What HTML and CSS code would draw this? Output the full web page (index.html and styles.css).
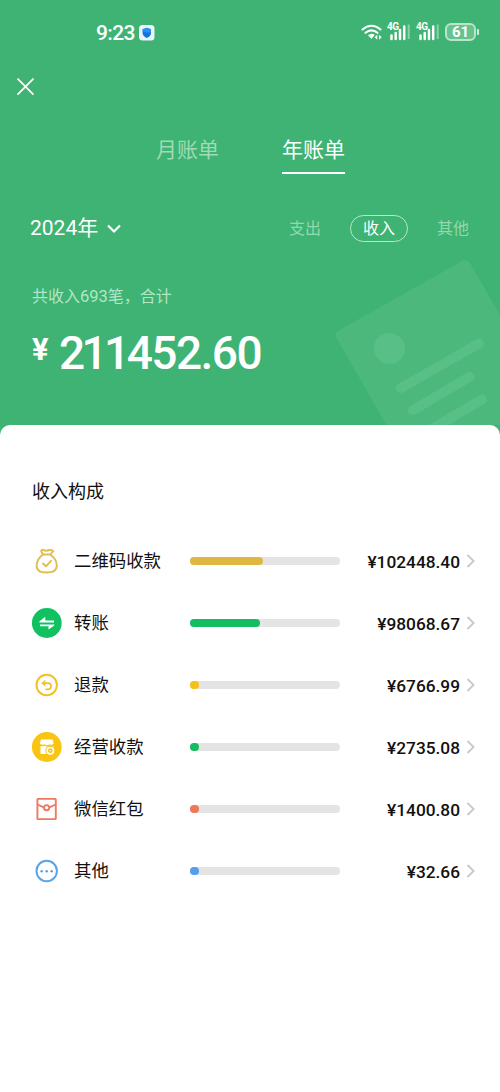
FILE: index.html
```
<!DOCTYPE html>
<html lang="zh-CN">
<head>
<meta charset="utf-8">
<title>年账单</title>
<link rel="stylesheet" href="styles.css">
</head>
<body>
<div class="screen">
  <header class="hero">
    <svg class="bill-art" width="190" height="185" viewBox="310 240 190 185" aria-hidden="true">
      <path class="art-sheet" d="M338 331L462 261Q466 258 470 263L500 315V426H387L336 337Q334 333 338 331Z"/>
      <circle class="art-mark" cx="389.500" cy="348.500" r="15.500"/>
      <path class="art-lines" d="M401 388L479 343.500M413 410L469.500 377M425 433L482 399.500"/>
    </svg>
    <div class="status">
      <span class="clock">9:23</span>
      <svg class="shield" width="16" height="16" viewBox="0 0 16 16"><rect width="15.500" height="15.500" rx="3.500" fill="#e9f5fb"/><path d="M7.800 2.700L12 4.200V8Q12 11.200 7.800 13Q3.600 11.200 3.600 8V4.200Z" fill="#1672df"/><path d="M7.800 2.700L12 4.200V7Q8 9 3.600 6V4.200Z" fill="#2b91ee"/></svg>
      <div class="status-right">
        <svg class="wifi" width="22" height="18" viewBox="0 0 22 18"><path d="M1.500 6.500Q10.500-1 19.500 6.500M4.500 9.800Q10.500 4.800 16.500 9.800" fill="none" stroke="#fff" stroke-width="2.100" stroke-linecap="round"/><path d="M6.900 12.200Q10.500 9.300 13.700 11.800L10.500 16Z" fill="#fff"/><path d="M13.500 14.300L16.300 11.800V16.800ZM20.700 14.300L18 11.800V16.800Z" fill="#fff"/></svg>
        <div class="cell"><span>4G</span><svg width="24" height="18" viewBox="0 0 24 18"><path d="M4.500 12.500V16M8.700 10V16M13 7V16M17.200 3.500V16" stroke="#fff" stroke-width="2.500" stroke-linecap="round"/><path d="M21.700 1.500V16" stroke="#8bd1aa" stroke-width="2"/></svg></div>
        <div class="cell"><span>4G</span><svg width="24" height="18" viewBox="0 0 24 18"><path d="M4.500 12.500V16M8.700 10V16M13 7V16M17.200 3.500V16" stroke="#fff" stroke-width="2.500" stroke-linecap="round"/><path d="M21.700 1.500V16" stroke="#8bd1aa" stroke-width="2"/></svg></div>
        <div class="battery">61</div>
      </div>
    </div>
    <div class="nav"><svg width="20" height="20" viewBox="0 0 20 20"><path d="M1.500 1.700L17.500 17.700M17.500 1.700L1.500 17.700" stroke="#fff" stroke-width="1.700"/></svg></div>
    <div class="tabs"><span class="tab">月账单</span><span class="tab tab-on">年账单</span></div>
    <div class="filters">
      <span class="year">2024年</span>
      <svg class="down" width="16" height="12" viewBox="0 0 16 12"><path d="M2 2.500L8 8.500L14 2.500" fill="none" stroke="#fff" stroke-width="2.200"/></svg>
      <div class="kinds"><span>支出</span><span class="kind-on">收入</span><span>其他</span></div>
    </div>
    <div class="summary">共收入<span class="count">693</span>笔，合计</div>
    <div class="total"><span class="yen">¥</span><span class="sum"><span class="tight">211</span>452.60</span></div>
  </header>
  <main class="card">
    <h1>收入构成</h1>
    <div class="row">
      <svg class="icon" width="30" height="30" viewBox="0 0 30 30"><g fill="none" stroke="#e2bd50" stroke-width="2" stroke-linejoin="round" stroke-linecap="round"><path d="M11 8.500C6 12 4.600 17 4.600 20C4.600 25 8 26.500 14.500 26.500C22 26.500 24.800 24.500 24.800 20C24.800 15.500 22 11 18 8.500Z"/><path d="M11 8.500L9.300 5.500Q9 3.800 11 3.800Q14 5.300 16.500 4.300Q19 3.700 21.300 5L18.500 8.500"/><path d="M11 17.500L14 20.300L19 14.800"/></g></svg>
      <span class="name">二维码收款</span>
      <div class="bar"><div class="fill gold" style="width:48.6%"></div></div>
      <span class="amount">¥102448.40</span><svg class="go" width="10" height="16" viewBox="0 0 10 16"><path d="M1.500 2L7.600 8L1.500 14"/></svg>
    </div>
    <div class="row">
      <svg class="icon" width="30" height="30" viewBox="0 0 30 30"><circle cx="14.800" cy="15" r="14.900" fill="#0fc161"/><path d="M13.300 8.800V12.600H22V14.400H7.500V13.300ZM16.500 21.500V18.200H8V16.400H22.300V17.500Z" fill="#fff"/></svg>
      <span class="name">转账</span>
      <div class="bar"><div class="fill green" style="width:46.6%"></div></div>
      <span class="amount">¥98068.67</span><svg class="go" width="10" height="16" viewBox="0 0 10 16"><path d="M1.500 2L7.600 8L1.500 14"/></svg>
    </div>
    <div class="row">
      <svg class="icon" width="30" height="30" viewBox="0 0 30 30"><g fill="none" stroke="#f2c225"><circle cx="14.700" cy="15" r="10.200" stroke-width="2"/><path d="M11.500 13.200H16.500A3.100 3.100 0 0 1 16.500 19.300H13.500" stroke-width="1.800"/></g><path d="M9.300 13.200L13.300 9.700V16.700Z" fill="#f2c225"/></svg>
      <span class="name">退款</span>
      <div class="bar"><div class="fill yellow" style="width:3%"></div></div>
      <span class="amount">¥6766.99</span><svg class="go" width="10" height="16" viewBox="0 0 10 16"><path d="M1.500 2L7.600 8L1.500 14"/></svg>
    </div>
    <div class="row">
      <svg class="icon" width="30" height="30" viewBox="0 0 30 30"><circle cx="14.800" cy="15" r="14.900" fill="#f8c513"/><path d="M9 7.500H20.500L21.700 11.500Q19.700 13.600 17.700 12.200Q15 14 12.500 12.200Q10 13.700 7.800 11.500Z" fill="#fff"/><path d="M8.500 14Q10.500 14.700 12.400 13.700Q15 15.200 17.700 13.700Q19.500 14.700 21.500 14V22H8.500Z" fill="#fff"/><circle cx="18.300" cy="18.700" r="5" fill="#f8c513"/><circle cx="18.300" cy="18.700" r="3.200" fill="none" stroke="#fff" stroke-width="1.700"/><circle cx="18.300" cy="18.700" r=".8" fill="#fff"/></svg>
      <span class="name">经营收款</span>
      <div class="bar"><div class="fill green" style="width:3%"></div></div>
      <span class="amount">¥2735.08</span><svg class="go" width="10" height="16" viewBox="0 0 10 16"><path d="M1.500 2L7.600 8L1.500 14"/></svg>
    </div>
    <div class="row">
      <svg class="icon" width="30" height="30" viewBox="0 0 30 30"><g fill="none" stroke="#ee7960" stroke-width="1.900"><rect x="5.400" y="4.900" width="18.400" height="20.200" rx=".6"/><path d="M5.400 10.500L11.800 13.300M17.400 13.300L23.800 10.500"/><circle cx="14.600" cy="13.700" r="2.600"/></g></svg>
      <span class="name">微信红包</span>
      <div class="bar"><div class="fill red" style="width:3%"></div></div>
      <span class="amount">¥1400.80</span><svg class="go" width="10" height="16" viewBox="0 0 10 16"><path d="M1.500 2L7.600 8L1.500 14"/></svg>
    </div>
    <div class="row">
      <svg class="icon" width="30" height="30" viewBox="0 0 30 30"><circle cx="14.700" cy="15" r="10.200" fill="none" stroke="#5ba4ea" stroke-width="2"/><g fill="#5b9bdc"><circle cx="9.700" cy="15.200" r="1.200"/><circle cx="14.700" cy="15.200" r="1.200"/><circle cx="19.700" cy="15.200" r="1.200"/></g></svg>
      <span class="name">其他</span>
      <div class="bar"><div class="fill blue" style="width:3%"></div></div>
      <span class="amount">¥32.66</span><svg class="go" width="10" height="16" viewBox="0 0 10 16"><path d="M1.500 2L7.600 8L1.500 14"/></svg>
    </div>
  </main>
</div>
</body>
</html>
```
FILE: styles.css
```
* { box-sizing: border-box; }
body { margin: 0; font-family: Roboto, "Noto Sans CJK SC", sans-serif; }
svg { display: block; flex: none; }
.screen { width: 500px; height: 1092px; background: #3eb373; display: flex; flex-direction: column; overflow: hidden; }
.hero { height: 425px; position: relative; color: #fff; flex: none; isolation: isolate; }
.bill-art { position: absolute; right: 0; bottom: 0; z-index: -1; }
.art-sheet { fill: #4cb87c; }
.art-mark { fill: #58bf86; }
.art-lines { fill: none; stroke: #58bf86; stroke-width: 10px; stroke-linecap: round; }
.status { height: 64px; display: flex; align-items: center; padding: 0 21px 0 96px; }
.clock { font-size: 21px; line-height: 24px; width: 43px; letter-spacing: -.6px; font-weight: 500; padding-top: 1px; }
.shield { margin-top: 1px; }
.status-right { margin-left: auto; display: flex; align-items: center; }
.wifi { margin-right: 4px; }
.cell { display: flex; position: relative; width: 24px; margin-right: 5px; }
.cell span { position: absolute; left: 0; top: -2px; font-size: 10px; line-height: 12px; font-weight: 700; letter-spacing: -.5px; }
.battery { width: 31px; height: 18px; border: 2px solid #b9e5cb; border-radius: 6px; background: #66c28e; font-size: 15px; line-height: 15px; font-weight: 700; text-align: center; position: relative; margin-right: 3px; }
.battery::after { content: ""; position: absolute; right: -5px; top: 4px; width: 2px; height: 6px; background: #d8f0e1; border-radius: 1px; }
.nav { height: 46px; padding: 13px 0 0 16px; }
.tabs { height: 90px; padding: 21px 0 0 156px; display: flex; gap: 63px; align-items: flex-start; font-size: 21px; line-height: 39px; }
.tab { width: 63px; height: 43px; color: #9fdcb5; white-space: nowrap; }
.tab-on { color: #fff; border-bottom: 2px solid #fff; }
.filters { height: 56px; display: flex; align-items: center; padding: 0 31px 0 30px; }
.year { font-size: 21px; line-height: 30px; width: 76px; white-space: nowrap; }
.down { margin-top: 2px; }
.kinds { margin-left: auto; display: flex; align-items: center; gap: 29px; font-size: 16px; line-height: 25px; color: #94d8ae; }
.kind-on { width: 58px; height: 27px; border: 1px solid #b9e7ca; border-radius: 14px; color: #fff; text-align: center; }
.summary { height: 40px; line-height: 24px; padding: 29px 0 0 32px; font-size: 16px; color: #b3e6c6; }
.count { font-size: 16.500px; }
.total { display: flex; align-items: flex-start; padding: 27px 0 0 32px; }
.yen { font-size: 31px; line-height: 54px; font-weight: 700; width: 27px; }
.sum { font-size: 46px; line-height: 60px; font-weight: 500; letter-spacing: -1.500px; }
.tight { letter-spacing: -3.600px; }
.card { flex: 1; background: #fff; border-radius: 10px 10px 0 0; padding: 53px 24px 0 32px; color: #111; }
h1 { font-size: 18px; line-height: 28px; font-weight: 400; margin: 0 0 24px; }
.row { height: 62px; display: flex; align-items: center; }
.name { margin-left: 12px; width: 116px; font-size: 17.400px; line-height: 28px; white-space: nowrap; }
.bar { width: 150px; height: 8px; border-radius: 4px; background: #e4e4e4; }
.fill { height: 8px; min-width: 9px; border-radius: 4px; }
.gold { background: #dfb740; }
.green { background: #14bd62; }
.yellow { background: #f2c216; }
.red { background: #ef7858; }
.blue { background: #559eec; }
.amount { margin-left: auto; font-size: 17.300px; font-weight: 500; line-height: 24px; padding-top: 1px; }
.go { margin-left: 6px; fill: none; stroke: #c8c8c8; stroke-width: 1.800px; }
```
